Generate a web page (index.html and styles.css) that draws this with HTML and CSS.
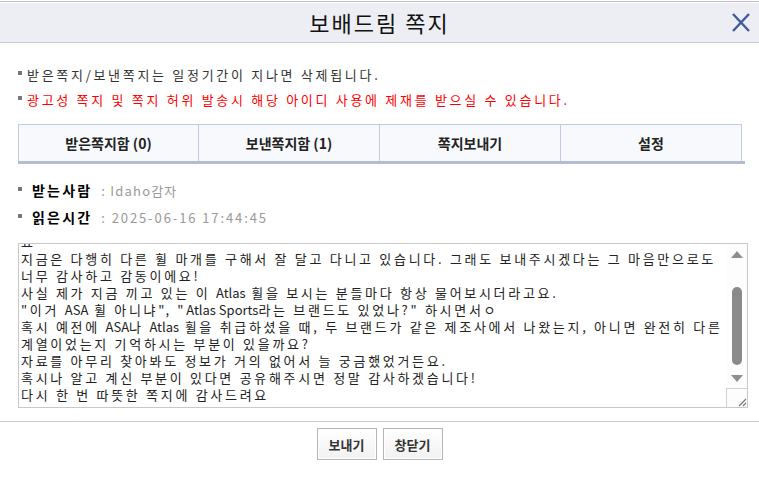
FILE: index.html
```html
<!DOCTYPE html>
<html>
<head>
  <meta charset="utf-8">
  <title>보배드림 쪽지</title>
  <link rel="stylesheet" href="styles.css">
</head>
<body>
  <div class="top">
    <span></span>
    <h1 class="top-title">보배드림 쪽지</h1>
    <a class="top-close" href="#" title="닫기">
      <svg width="20" height="19" viewBox="0 0 20 19"><path d="M2 1 L18 18 M18 1 L2 18" stroke="#3f5b99" stroke-width="2.4" fill="none"/></svg>
    </a>
  </div>

  <ul class="notice">
    <li>받은쪽지/보낸쪽지는 일정기간이 지나면 삭제됩니다.</li>
    <li class="warn">광고성 쪽지 및 쪽지 허위 발송시 해당 아이디 사용에 제재를 받으실 수 있습니다.</li>
  </ul>

  <ul class="tabs">
    <li>받은쪽지함 (0)</li>
    <li>보낸쪽지함 (1)</li>
    <li>쪽지보내기</li>
    <li>설정</li>
  </ul>

  <ul class="info">
    <li><b>받는사람</b><span class="info-val">: Idaho감자</span></li>
    <li><b>읽은시간</b><span class="info-val date">: 2025-06-16 17:44:45</span></li>
  </ul>

  <div class="msg-box">
    <div class="msg-text">
      <div class="msg-inner">
        <div>요</div>
        <div>지금은 다행히 다른 휠 마개를 구해서 잘 달고 다니고 있습니다. 그래도 보내주시겠다는 그 마음만으로도</div>
        <div>너무 감사하고 감동이에요!</div>
        <div>사실 제가 지금 끼고 있는 이 <span class="en">Atlas</span> 휠을 보시는 분들마다 항상 물어보시더라고요.</div>
        <div>"이거 <span class="en">ASA</span> 휠 아니냐", "<span class="en">Atlas Sports</span>라는 브랜드도 있었나?" 하시면서ㅇ</div>
        <div>혹시 예전에 <span class="en">ASA</span>나 <span class="en">Atlas</span> 휠을 취급하셨을 때, 두 브랜드가 같은 제조사에서 나왔는지, 아니면 완전히 다른</div>
        <div>계열이었는지 기억하시는 부분이 있을까요?</div>
        <div>자료를 아무리 찾아봐도 정보가 거의 없어서 늘 궁금했었거든요.</div>
        <div>혹시나 알고 계신 부분이 있다면 공유해주시면 정말 감사하겠습니다!</div>
        <div>다시 한 번 따뜻한 쪽지에 감사드려요</div>
      </div>
    </div>
    <div class="sb">
      <div class="sb-btn"><svg width="12" height="7" viewBox="0 0 12 7"><path d="M0 7 L6 0 L12 7 Z" fill="#8e8e8e"/></svg></div>
      <div class="sb-track"><div class="sb-thumb"></div></div>
      <div class="sb-btn"><svg width="12" height="7" viewBox="0 0 12 7"><path d="M0 0 L12 0 L6 7 Z" fill="#8e8e8e"/></svg></div>
      <div class="sb-grip"><svg width="10" height="10" viewBox="0 0 10 10"><path d="M9 2 L2 9 M9 6 L6 9" stroke="#777" stroke-width="1.2"/></svg></div>
    </div>
  </div>

  <div class="foot">
    <button class="btn">보내기</button>
    <button class="btn">창닫기</button>
  </div>
</body>
</html>
```

FILE: styles.css
```css
body {
  margin: 0;
  padding-top: 1px;
  font-family: "Noto Sans CJK KR", "Liberation Sans", sans-serif;
  background-color: #fff;
  color: #333;
}

ul {
  list-style: none;
  margin: 0;
  padding: 0;
}

/* 상단 타이틀 바 */
.top {
  display: grid;
  grid-template-columns: 1fr auto 1fr;
  align-items: center;
  height: 40px;
  background-color: #edeef3;
  border-top: 1px solid #bfc2cb;
  border-bottom: 1px solid #c5cad8;
  box-shadow: inset 0 1px 0 #fff;
}

.top-title {
  margin: 0;
  font-size: 22px;
  font-weight: normal;
  letter-spacing: 2px;
  color: #111;
}

.top-close {
  justify-self: end;
  margin-right: 8px;
  display: flex;
}

/* 안내 문구 */
.notice {
  padding: 19px 18px 0;
  font-size: 13px;
  letter-spacing: 2.7px;
  line-height: 25px;
}

.notice li,
.info li {
  display: flex;
  align-items: center;
}

.notice li::before,
.info li::before {
  content: "";
  width: 4px;
  height: 4px;
  margin-top: -4px;
  margin-right: 5px;
  background-color: #777;
}

.notice .warn {
  color: #f00;
}

/* 탭 */
.tabs {
  display: flex;
  margin: 12px 14px 0 18px;
  border-bottom: 3px solid #b5bcd0;
}

.tabs li {
  width: 180px;
  height: 36px;
  line-height: 36px;
  text-align: center;
  font-size: 14px;
  font-weight: bold;
  color: #222;
  background-color: #f7f9fd;
  border-top: 1px solid #c3cbe0;
  border-right: 1px solid #c3cbe0;
}

.tabs li:first-child {
  border-left: 1px solid #c3cbe0;
  width: 179px;
}

/* 받는사람 / 읽은시간 */
.info {
  margin-top: 13px;
  padding-left: 18px;
  line-height: 27px;
}

.info li::before {
  margin-right: 10px;
  margin-top: -3px;
}

.info b {
  font-size: 14px;
  letter-spacing: 2.2px;
  color: #000;
}

.info-val {
  margin-left: 9px;
  font-size: 13px;
  color: #999;
  letter-spacing: 1.2px;
}

.info-val.date {
  letter-spacing: 1.9px;
}

/* 쪽지 내용 */
.msg-box {
  display: flex;
  margin: 12px 0 0 18px;
  width: 728px;
  height: 163px;
  border: 1px solid #c8c8c8;
}

.msg-text {
  flex: 1;
  overflow: hidden;
  padding-left: 2px;
}

.msg-inner {
  margin-top: -11px;
  font-size: 13px;
  line-height: 17px;
  letter-spacing: 2.7px;
  color: #222;
}

.msg-inner div {
  height: 17px;
  white-space: pre;
}

/* 영문은 자간 없이 */
.msg-inner .en {
  display: inline-block;
  letter-spacing: 0;
}

.sb {
  width: 20px;
  display: flex;
  flex-direction: column;
  background-color: #fdfdfd;
}

.sb-btn {
  height: 20px;
  display: flex;
  align-items: center;
  justify-content: center;
}

.sb-track {
  flex: 1;
  display: flex;
  justify-content: center;
}

.sb-thumb {
  width: 10px;
  height: 78px;
  margin-top: 23px;
  border-radius: 5px;
  background-color: #8a8a8a;
}

.sb-grip {
  height: 18px;
  border-top: 1px solid #d2d2d2;
  border-left: 1px solid #d2d2d2;
  margin-left: -1px;
  display: flex;
  align-items: flex-end;
  justify-content: flex-end;
}

/* 하단 버튼 */
.foot {
  margin-top: 13px;
  border-top: 1px solid #c8cdd9;
  padding-top: 6px;
  display: flex;
  justify-content: center;
  gap: 6px;
}

.btn {
  width: 60px;
  height: 32px;
  font-family: "Noto Sans CJK KR", sans-serif;
  font-size: 13px;
  font-weight: bold;
  color: #333;
  background: linear-gradient(#fff, #f1f1f1);
  border: 1px solid #b5b5b5;
  box-shadow: inset 0 0 0 1px #fff;
  padding: 0;
  cursor: pointer;
}
```
